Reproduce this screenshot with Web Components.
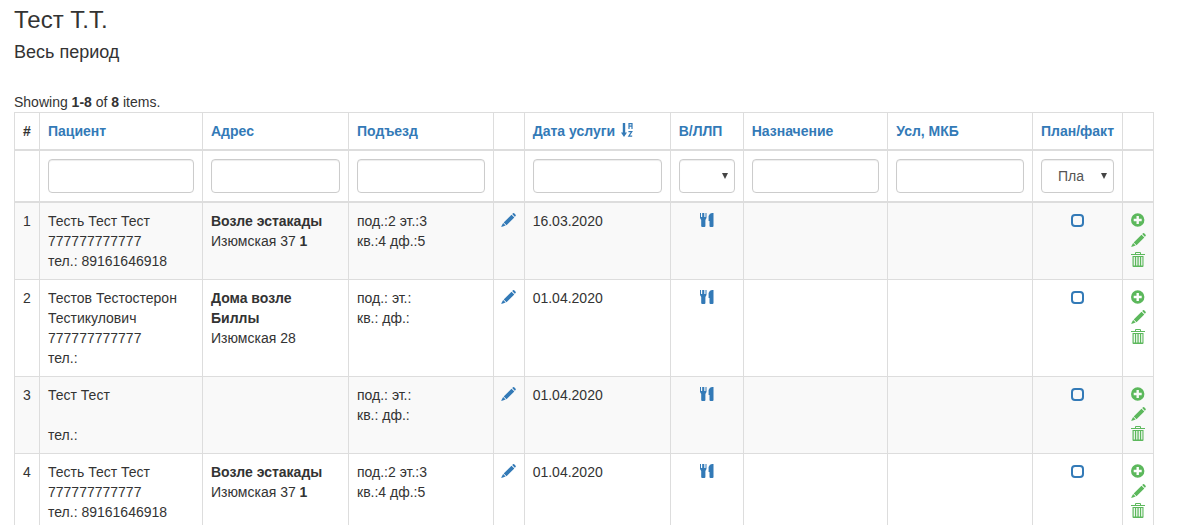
<!DOCTYPE html>
<html lang="ru">
<head>
<meta charset="utf-8">
<title>Тест Т.Т.</title>
<style>
html { overflow-x: hidden; }
body { margin: 0; background: #fff; color: #333; font: 14px/20px "Liberation Sans", Arial, sans-serif; }
</style>
</head>
<body>
<report-page>
  <span slot="title">Тест Т.Т.</span>
  <span slot="period">Весь период</span>
  <visit-grid></visit-grid>
</report-page>

<template id="report-page">
  <style>
    :host { display: block; padding: 7px 25px 0 14px; }
    h3, h4 { margin: 0; font-weight: 400; }
    h3 { font-size: 24px; line-height: 26px; }
    h4 { font-size: 18px; line-height: 20px; margin: 9px 0 30px; }
  </style>
  <h3><slot name="title"></slot></h3>
  <h4><slot name="period"></slot></h4>
  <slot></slot>
</template>

<template id="visit-grid">
  <style>
    :host { display: block; }
    table { width: 100%; table-layout: fixed; border-collapse: collapse; }
    th, td { border: 1px solid #ddd; padding: 8px; text-align: left; vertical-align: top; }
    thead th, thead td { border-bottom-width: 2px; }
    th { white-space: nowrap; }
    tbody tr:nth-child(odd) { background: #f9f9f9; }
    a { color: #337ab7; text-decoration: none; }
    th glyph-icon { margin-left: 2px; }
    .num { width: 25px; } .name { width: 163px; } .icon { width: 31px; }
    .wide { width: 146px; } .type { width: 73px; } .plan { width: 90px; }
    td a.mark { display: flex; justify-content: center; align-items: center; height: 18px; }
    .actions { display: grid; }
    .actions a.mark { height: 20px; justify-content: start; }
    td.tools { padding-top: 7px; }
    input[type=checkbox] { appearance: none; display: block; box-sizing: border-box; width: 13px; height: 13px;
      margin: 3px auto 0; border: 2px solid #337ab7; border-radius: 4px; background: transparent; }
    .green a { color: #5cb85c; }
  </style>
  <div>Showing <b>1-8</b> of <b>8</b> items.</div>
  <table>
    <colgroup><col class="num"><col class="name"><col class="wide"><col><col class="icon"><col class="wide"><col class="type"><col><col><col class="plan"><col class="icon"></colgroup>
    <thead>
      <tr>
        <th>#</th><th><a href="#">Пациент</a></th><th><a href="#">Адрес</a></th><th><a href="#">Подъезд</a></th><th></th>
        <th><a href="#">Дата услуги <glyph-icon name="sort"></glyph-icon></a></th>
        <th><a href="#">В/ЛЛП</a></th><th><a href="#">Назначение</a></th><th><a href="#">Усл, МКБ</a></th><th><a href="#">План/факт</a></th><th></th>
      </tr>
      <tr>
        <td></td>
        <td><filter-input label="Пациент"></filter-input></td>
        <td><filter-input label="Адрес"></filter-input></td>
        <td><filter-input label="Подъезд"></filter-input></td>
        <td></td>
        <td><filter-input label="Дата услуги"></filter-input></td>
        <td><filter-select label="В/ЛЛП" value=""></filter-select></td>
        <td><filter-input label="Назначение"></filter-input></td>
        <td><filter-input label="Усл, МКБ"></filter-input></td>
        <td><filter-select label="План/факт" value="Пла"></filter-select></td>
        <td></td>
      </tr>
    </thead>
    <tbody></tbody>
  </table>
</template>

<template id="filter-input">
  <style>
    :host { display: block; }
    input { display: block; box-sizing: border-box; width: 100%; height: 34px; padding: 6px 12px; border: 1px solid #ccc; border-radius: 4px;
      background: #fff; color: #555; font: inherit; box-shadow: inset 0 1px 1px rgba(0,0,0,.075); }
  </style>
  <input type="text">
</template>

<template id="filter-select">
  <style>
    :host { display: block; }
    select { appearance: none; display: block; box-sizing: border-box; width: 100%; height: 34px; padding: 6px 16px; border: 1px solid #ccc; border-radius: 4px;
      color: #555; font: inherit; box-shadow: inset 0 1px 1px rgba(0,0,0,.075);
      background: #fff url("data:image/svg+xml,%3Csvg xmlns='http://www.w3.org/2000/svg' width='6' height='6'%3E%3Cpath d='M0 0h6L3 6z' fill='%23444'/%3E%3C/svg%3E") no-repeat right 6px center; }
  </style>
  <select><option></option></select>
</template>

<script>
const tpl = id => document.getElementById(id).content.cloneNode(true);

const GLYPHS = {
  sort: [12, 14, '<path d="M1.8 0h2.4v9.5H6L3 14 0 9.5h1.8z"/><path d="M8 6V.7h3V6M8 3.2h3M7.4 8.7h3.4L7.8 13.2h3.4" fill="none" stroke="currentColor" stroke-width="1.2"/>'],
  pencil: [15, 14, '<path d="M11.2 1.1 12 .3q.6-.5 1.2 0l1.4 1.4q.5.6 0 1.2l-.8.8zM10.5 1.7l2.8 2.8-7.8 7.7-2.8-2.8zM2.1 10l2.6 2.6L0 14z"/>'],
  cutlery: [14, 14, '<path d="M0 0h1v4h1.2V0h2.1v4h1.2V0h1v5L5.4 7v6q0 1-1 1H2.2q-1 0-1-1V7L0 5zM13.5 0v13q0 1-1 1h-2q-1 0-1-1V8H8.6V3q1-3 3.4-3z"/>'],
  plus: [14, 14, '<path fill-rule="evenodd" d="M6.7.3a6.7 6.7 0 1 1 0 13.4A6.7 6.7 0 0 1 6.7.3zM5.5 3v2.8H2.7v2.4h2.8V11h2.4V8.2h2.8V5.8H7.9V3z"/>'],
  trash: [14, 16, '<path fill-rule="evenodd" d="M4 2V1q0-1 1-1h4q1 0 1 1v1h4v1H0V2zM5 1v1h4V1zM1.5 4h11v10q0 1-1 1h-9q-1 0-1-1zM2.7 5v8.5h1.2V5zM5.2 5v8.5h1.2V5zM7.7 5v8.5h1.2V5zM10.2 5v8.5h1.2V5z"/>']
};

customElements.define('report-page', class extends HTMLElement {
  constructor() { super(); this.attachShadow({ mode: 'open' }).append(tpl('report-page')); }
});

customElements.define('glyph-icon', class extends HTMLElement {
  constructor() { super(); this.attachShadow({ mode: 'open' }); }
  connectedCallback() {
    const [w, h, shape] = GLYPHS[this.getAttribute('name')];
    this.shadowRoot.innerHTML = `<style>:host{display:inline-block;vertical-align:-1px;line-height:0}svg{display:block;fill:currentColor}</style>
      <svg width="${w}" height="${h}" viewBox="0 0 ${w} ${h}" aria-hidden="true">${shape}</svg>`;
  }
});

customElements.define('filter-input', class extends HTMLElement {
  constructor() { super(); this.attachShadow({ mode: 'open' }).append(tpl('filter-input')); }
  connectedCallback() { this.shadowRoot.querySelector('input').setAttribute('aria-label', this.getAttribute('label')); }
});

customElements.define('filter-select', class extends HTMLElement {
  constructor() { super(); this.attachShadow({ mode: 'open' }).append(tpl('filter-select')); }
  connectedCallback() {
    this.shadowRoot.querySelector('select').setAttribute('aria-label', this.getAttribute('label'));
    this.shadowRoot.querySelector('option').textContent = this.getAttribute('value');
  }
});

const first = ['Тесть Тест Тест<br>777777777777<br>тел.: 89161646918', '<b>Возле эстакады</b><br>Изюмская 37 <b>1</b>', 'под.:2 эт.:3<br>кв.:4 дф.:5'];
const VISITS = [
  [...first, '16.03.2020'],
  ['Тестов Тестостерон Тестикулович<br>777777777777<br>тел.:', '<b>Дома возле Биллы</b><br>Изюмская 28', 'под.: эт.:<br>кв.: дф.:', '01.04.2020'],
  ['Тест Тест<br><br>тел.:', '', 'под.: эт.:<br>кв.: дф.:', '01.04.2020'],
  [...first, '01.04.2020']
];

customElements.define('visit-grid', class extends HTMLElement {
  constructor() {
    super();
    this.attachShadow({ mode: 'open' }).append(tpl('visit-grid'));
    const mark = (name, label) => `<a class="mark" href="#" aria-label="${label}"><glyph-icon name="${name}"></glyph-icon></a>`;
    this.shadowRoot.querySelector('tbody').innerHTML = VISITS.map(([name, address, entrance, date], i) => `<tr>
      <td>${i + 1}</td><td>${name}</td><td>${address}</td><td>${entrance}</td>
      <td>${mark('pencil', 'Изменить адрес')}</td><td>${date}</td><td>${mark('cutlery', 'Питание')}</td><td></td><td></td>
      <td><input type="checkbox" aria-label="План/факт"></td>
      <td class="tools"><div class="actions green">${mark('plus', 'Добавить')}${mark('pencil', 'Изменить')}${mark('trash', 'Удалить')}</div></td></tr>`).join('');
  }
});
</script>
</body>
</html>
